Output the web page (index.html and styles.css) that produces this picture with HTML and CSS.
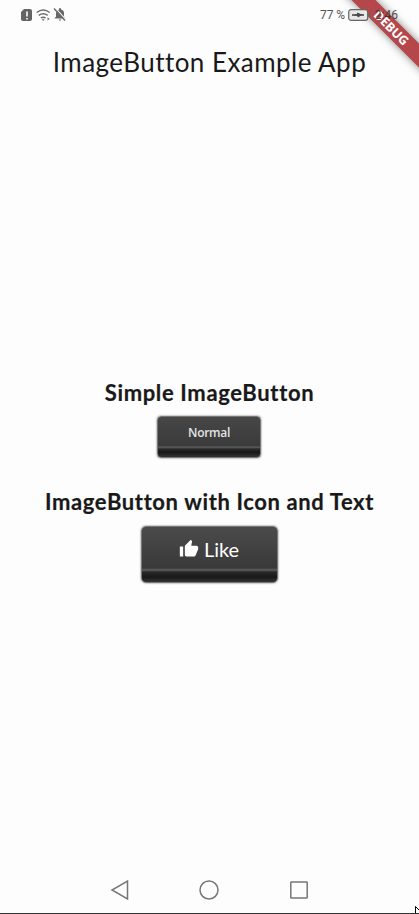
FILE: index.html
```html
<!DOCTYPE html>
<html lang="en">
<head>
<meta charset="utf-8">
<title>ImageButton Example App</title>
<link rel="stylesheet" href="styles.css">
</head>
<body>
<div class="screen">
  <div class="status">
    <svg class="status-icons" width="46" height="16" viewBox="0 0 46 16">
      <path d="M3 2h6q2 0 2 2v8q0 2-2 2H2q-2 0-2-2V5z" fill="#646464"/>
      <path d="M6 4.500v5M6 11v1.500" stroke="#fdfdfd" stroke-width="1.600"/>
      <path d="M15.700 5.500q6.500-5 13 0M17.700 8.400q4.500-3.200 9 0M19.800 11q2.400-1.700 4.800 0" fill="none" stroke="#6c6c6c" stroke-width="1.500"/>
      <path d="M20.700 12.300h3L22.200 14z" fill="#6c6c6c"/><path d="M26.500 10.200l2.300 1.700-2.300 1.700z" fill="#777"/>
      <path d="M33.500 11.500l1.500-2V6q.5-3 3-3.600V1.300h2v1.100q3 .6 3 3.600v3.500l1.500 2zM37.500 12.500h3L39 14z" fill="#686868"/>
      <path d="M34.600 1.300l10.500 11.500" stroke="#fdfdfd" stroke-width="1.200"/>
      <path d="M33 1.500l11 12" stroke="#686868" stroke-width="1.400"/>
    </svg>
    <div class="status-right">
      <span class="percent">77 %</span>
      <svg width="23" height="12" viewBox="0 0 23 12"><rect x=".7" y=".7" width="19" height="10.600" rx="2.400" fill="#e8e8e8" stroke="#656565" stroke-width="1.200"/><path d="M21.800 4v4" stroke="#656565" stroke-width="1.300"/><path d="M4 6l5.500-.5V4L12 5.300l4 .7-5 .6V8L8.500 6.500z" fill="#484848" stroke="#484848"/></svg>
      <span class="clock">2:46</span>
    </div>
  </div>
  <h1 class="title">ImageButton Example App</h1>
  <main class="content">
    <h2 class="label simple-label">Simple ImageButton</h2>
    <button class="key simple">Normal</button>
    <h2 class="label icon-label">ImageButton with Icon and Text</h2>
    <button class="key like">
      <svg width="20" height="20" viewBox="0 0 24 24"><path fill="#fff" d="M1 21h4V9H1v12zm22-11c0-1.100-.9-2-2-2h-6.310l.95-4.570.03-.32c0-.41-.17-.79-.44-1.060L14.170 1 7.590 7.590C7.220 7.950 7 8.450 7 9v10c0 1.100.9 2 2 2h9c.83 0 1.540-.5 1.840-1.220l3.020-7.050c.09-.23.14-.47.14-.73v-2z"/></svg>
      <span>Like</span>
    </button>
  </main>
  <nav class="nav">
    <svg width="20" height="22" viewBox="0 0 20 22"><path d="M17.500 2v18L2 11z"/></svg>
    <svg width="20" height="22" viewBox="0 0 20 22"><circle cx="10" cy="11" r="9"/></svg>
    <svg width="20" height="22" viewBox="0 0 20 22"><rect x="1.800" y="3" width="16.400" height="16" rx=".5"/></svg>
  </nav>
  <div class="ribbon"><span>DEBUG</span></div>
  <svg class="cursor" width="4" height="8" viewBox="0 0 4 8"><path d="M0 0l4 4v4H0z" fill="#fff"/><path d="M.5 8V.5L4 4" fill="none" stroke="#000"/></svg>
</div>
</body>
</html>
```
FILE: styles.css
```css
* { box-sizing: border-box; }
body { margin: 0; background: #fdfdfd; }
.screen {
  position: relative;
  display: flex;
  flex-direction: column;
  width: 419px;
  height: 914px;
  overflow: hidden;
  background: #fdfdfd;
  border-bottom: 1px solid #333;
  font-family: Lato, sans-serif;
  color: #191919;
}
.status {
  position: relative;
  z-index: 2;
  display: flex;
  justify-content: space-between;
  align-items: center;
  height: 30px;
  padding: 0 21px;
}
.status-right {
  display: flex;
  align-items: center;
  gap: 3px;
  font: 12px/16px Roboto, sans-serif;
  color: #555;
}
.percent { letter-spacing: -0.100px; }
.clock { margin-left: 1px; color: rgba(45, 45, 45, 0.850); }
.title {
  height: 64px;
  margin: 0;
  font-size: 26px;
  font-weight: 400;
  line-height: 64px;
  text-align: center;
  white-space: nowrap;
  letter-spacing: 0.460px;
}
.content {
  display: flex;
  flex: 1;
  flex-direction: column;
  align-items: center;
  padding: 285px 1px 0 0;
}
.label {
  margin: 0;
  padding-left: 1px;
  font-size: 22px;
  font-weight: 700;
  line-height: 28px;
  white-space: nowrap;
  -webkit-text-stroke: 0.200px #191919;
}
.simple-label { letter-spacing: 0.640px; }
.icon-label { margin-top: 30px; letter-spacing: 0.620px; }
.key {
  display: flex;
  align-items: center;
  justify-content: center;
  border: 1px solid #777;
  color: #fff;
  box-shadow: 0 0 2px #555;
}
.simple {
  width: 104px;
  height: 42px;
  margin-top: 9px;
  padding: 0 0 9px;
  border-radius: 4px;
  background: linear-gradient(#474747, #3a3a3a 29px, #626262 30px, #2b2b2b 32px, #151515 35px, #333 40px);
  font: 600 12px/16px "Open Sans", sans-serif;
  letter-spacing: -0.300px;
  color: #e4e4e4;
}
.like {
  gap: 5px;
  width: 137px;
  height: 57px;
  margin-top: 10px;
  padding: 0 0 12px;
  border-radius: 5px;
  background: linear-gradient(#4b4b4b, #393939 41px, #606060 43px, #282828 45px, #191919 50px, #333 55px);
  font: 20px/24px Lato, sans-serif;
}
.nav {
  display: flex;
  justify-content: center;
  align-items: center;
  gap: 69.500px;
  height: 47px;
  padding-right: 1px;
}
.nav svg { fill: none; stroke: #777; stroke-width: 1.500; }
.ribbon {
  position: absolute;
  top: 20px;
  left: 332px;
  width: 120px;
  height: 17px;
  background: #b5474b;
  box-shadow: 0 0 9px rgba(0, 0, 0, 0.480);
  transform: rotate(45deg);
  text-align: center;
  font: 700 12.500px/17px "Open Sans", sans-serif;
  color: #fff;
}
.ribbon span { position: relative; left: -1px; }
.cursor { position: absolute; right: 0; bottom: -1px; }
```
